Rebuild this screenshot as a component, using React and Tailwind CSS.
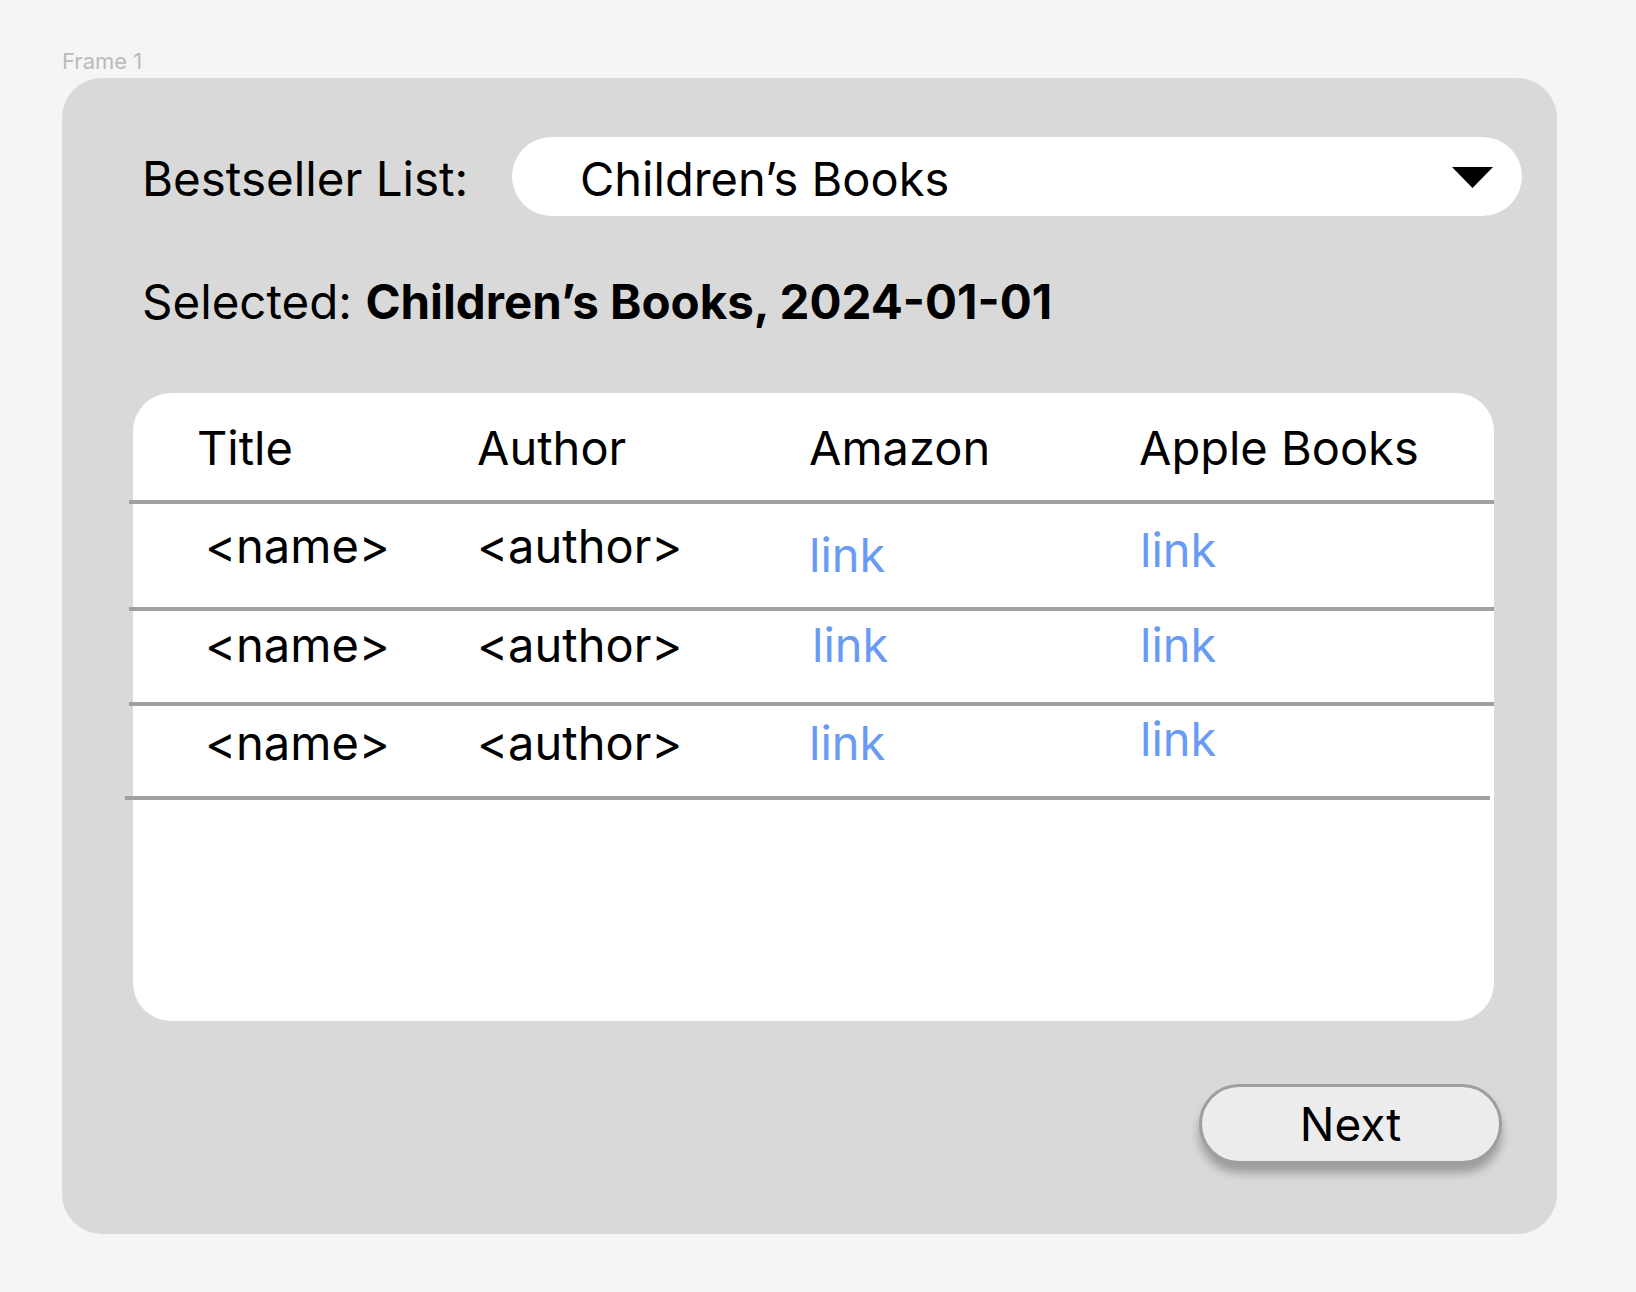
import React from 'react';

const rows = [
  { h: 'h-[103px]', namePt: 'pt-[18px]', amazonPt: 'pt-[27px]', amazonMl: '', applePt: 'pt-[22px]' },
  { h: 'h-[91px]', namePt: 'pt-[10px]', amazonPt: 'pt-[10px]', amazonMl: 'ml-[3px]', applePt: 'pt-[10px]' },
  { h: 'h-[90px]', namePt: 'pt-[13px]', amazonPt: 'pt-[13px]', amazonMl: '', applePt: 'pt-[9px]' },
];

const Divider = ({ last }) => (
  <div
    className={
      last
        ? '-ml-[8px] h-[4px] w-[1365px] bg-[#a0a0a0]'
        : '-ml-[4px] h-[4px] w-[1365px] bg-[#a0a0a0]'
    }
  />
);

const App = () => {
  return (
    <div className="min-h-screen bg-[#f5f5f5] pl-[62px] pt-[50px] font-['Inter',sans-serif] text-black">
      {/* Frame label */}
      <div className="text-[22px] leading-none text-[#bababa]">Frame 1</div>

      {/* Frame */}
      <div className="mt-[6px] flex h-[1156px] w-[1495px] flex-col rounded-[40px] bg-[#d9d9d9] pl-[71px] pt-[59px]">
        {/* Select row */}
        <div className="flex h-[79px] items-center">
          <div className="w-[379px] pl-[9px] pt-[5px] text-[47.5px] leading-none">Bestseller List:</div>
          <div className="flex h-[79px] w-[1010px] items-center justify-between rounded-full bg-white pl-[68px] pr-[29px]">
            <span className="pt-[3px] text-[47px] leading-none">Children’s Books</span>
            <svg width="41" height="21" viewBox="0 0 41 21" className="mt-[1px]">
              <polygon points="0,0 41,0 20.5,21" fill="#000" />
            </svg>
          </div>
        </div>

        {/* Selected */}
        <div className="mt-[62px] pl-[9px] text-[47.5px] leading-none">
          Selected: <span className="font-bold">Children’s Books, 2024-01-01</span>
        </div>

        {/* Table */}
        <div className="mt-[67px] h-[628px] w-[1361px] rounded-[38px] bg-white text-[47px] leading-none">
          <div className="grid h-[107px] grid-cols-[344px_332px_330px_1fr] pt-[31px]">
            <div className="pl-[64px]">Title</div>
            <div>Author</div>
            <div>Amazon</div>
            <div>Apple Books</div>
          </div>
          <Divider />
          {rows.map((r, i) => (
            <div key={i}>
              <div className={`grid grid-cols-[344px_332px_330px_1fr] ${r.h}`}>
                <div className={`pl-[72px] ${r.namePt}`}>&lt;name&gt;</div>
                <div className={r.namePt}>&lt;author&gt;</div>
                <div className={r.amazonPt}>
                  <span className={`text-[#6a9bf4] ${r.amazonMl}`}>link</span>
                </div>
                <div className={`pl-[1px] ${r.applePt}`}>
                  <span className="text-[#6a9bf4]">link</span>
                </div>
              </div>
              <Divider last={i === rows.length - 1} />
            </div>
          ))}
        </div>

        {/* Next button */}
        <div className="mt-[63px] flex justify-end pr-[55px]">
          <button className="flex h-[80px] w-[303px] items-center justify-center rounded-full border-[3px] border-[#9e9e9e] bg-[#ececec] text-[46px] leading-none shadow-[0_9px_10px_rgba(0,0,0,0.28)]">
            Next
          </button>
        </div>
      </div>
    </div>
  );
};

export default App;
